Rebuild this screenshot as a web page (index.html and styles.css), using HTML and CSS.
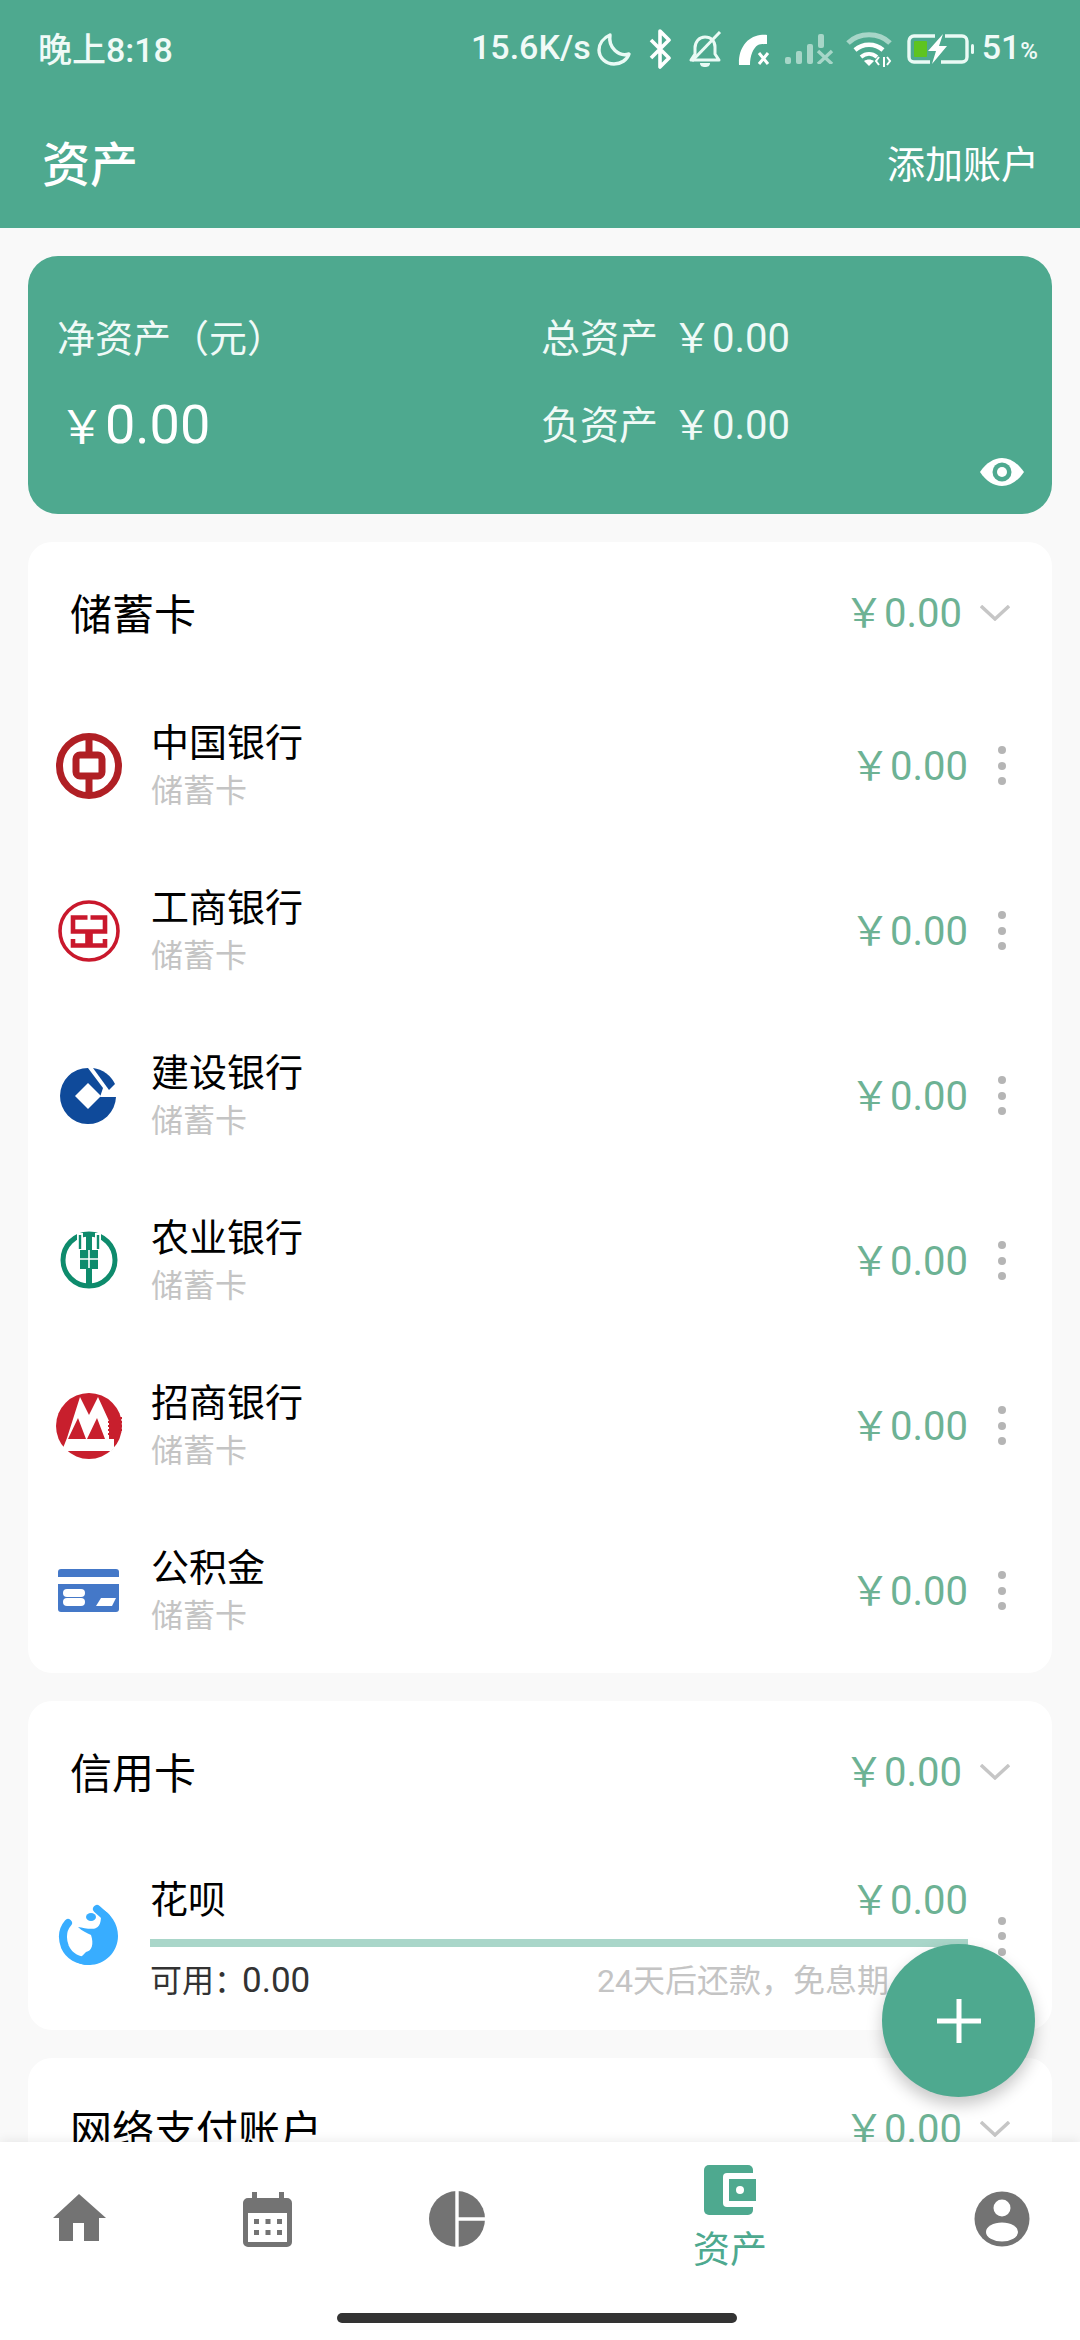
FILE: index.html
```html
<!DOCTYPE html>
<html lang="zh">
<head>
<meta charset="utf-8">
<title>资产</title>
<link rel="stylesheet" href="styles.css">
</head>
<body>
<div class="app">
  <header class="top">
    <div class="status">
      <span class="clock">晚上8:18</span>
      <div class="status-right">
        <span class="speed">15.6K/s</span>
        <svg class="st st-moon" viewBox="0 0 35 33"><path d="M13 2C6 5 2 11 2 17c0 8 7 14 15 14 7 0 13-4 15-10-10 3-21-6-19-19z" fill="none" stroke="#eafaf5" stroke-width="3.400" stroke-linejoin="round"/></svg>
        <svg class="st st-bt" viewBox="0 0 24 40"><path d="M3 11l18 18-9 9V2l9 9-18 18" fill="none" stroke="#fff" stroke-width="3.600" stroke-linejoin="round"/></svg>
        <svg class="st st-bell" viewBox="0 0 35 37"><path d="M17 6c-6 0-10 5-10 11v6l-4 6h28l-4-6v-7c0-6-4-10-10-10z" fill="none" stroke="#eafaf5" stroke-width="3" stroke-linejoin="round"/><path d="M32 1L4 30" stroke="#eafaf5" stroke-width="3"/><path d="M12 32h10c0 3-2 4-5 4s-5-1-5-4z" fill="#eafaf5"/></svg>
        <svg class="st st-phone" viewBox="0 0 33 31"><path d="M1 31C0 16 8 3 22 1c3-.5 6-.5 7 0v9c-3 0-7 0-9 1-5 3-8 11-8 20z" fill="#fff"/><path d="M21 19l9 11M30 19l-9 11" stroke="#fff" stroke-width="3"/></svg>
        <svg class="st st-signal" viewBox="0 0 49 30"><g fill="#a7d6c8"><rect x="0" y="23" width="6" height="7" rx="2"/><rect x="11" y="17" width="6" height="13" rx="2"/><rect x="22" y="10" width="6" height="20" rx="2"/><rect x="33" y="0" width="6" height="14" rx="2"/></g><path d="M33 17l14 13M47 17L33 30" stroke="#a7d6c8" stroke-width="3.400"/></svg>
        <svg class="st st-wifi" viewBox="0 0 46 35"><path d="M2 11C13 0 33 0 44 11" fill="none" stroke="#a7d6c8" stroke-width="5"/><path d="M9 18c8-7 20-7 28 0" fill="none" stroke="#fff" stroke-width="4.500"/><path d="M15 25c5-4 11-4 16 0" fill="none" stroke="#fff" stroke-width="4"/><path d="M18 29c3-2 7-2 10 0l-5 5z" fill="#fff"/><path d="M33 25l-3 4 3 4M38 25v10M41 25l3 4-3 4" fill="none" stroke="#fff" stroke-width="2"/></svg>
        <svg class="st st-bat" viewBox="0 0 68 30"><path d="M28 2H7a5 5 0 0 0-5 5v16a5 5 0 0 0 5 5h16M38 2h17a5 5 0 0 1 5 5v16a5 5 0 0 1-5 5H34" fill="none" stroke="#eafaf5" stroke-width="3.400"/><rect x="7" y="7" width="13" height="16" rx="1" fill="#5ec41f"/><path d="M36 0L21 17h8l-4 13 15-18h-8z" fill="#fff"/><rect x="64" y="10" width="3" height="10" rx="1.500" fill="#eafaf5"/></svg>
        <span class="pct">51<small>%</small></span>
      </div>
    </div>
    <div class="toolbar">
      <h1 class="title">资产</h1>
      <span class="add">添加账户</span>
    </div>
  </header>

  <main class="scroll">
    <section class="hero">
      <div class="hero-label">净资产（元）</div>
      <div class="hero-stat"><span>总资产</span><span class="hero-val">￥0.00</span></div>
      <div class="hero-big"><span class="yen">￥</span>0.00</div>
      <div class="hero-stat"><span>负资产</span><span class="hero-val">￥0.00</span></div>
      <svg class="eye" viewBox="0 0 44 28"><path d="M0 14C6 5 14 0 22 0s16 5 22 14c-6 9-14 14-22 14S6 23 0 14z" fill="#fff"/><circle cx="22" cy="14" r="9.500" fill="#4ea98f"/><circle cx="22" cy="14" r="5" fill="#fff"/></svg>
    </section>

    <section class="card">
      <div class="head"><span class="head-title">储蓄卡</span><span class="val">￥0.00</span><svg class="chev" viewBox="0 0 30 16"><path d="M1 1l14 13L29 1" fill="none" stroke="#c6c6c6" stroke-width="3.400"/></svg></div>

      <div class="row">
        <svg class="logo" viewBox="0 0 66 66"><circle cx="33" cy="33" r="29.500" fill="none" stroke="#b01f24" stroke-width="7"/><rect x="20" y="22" width="26" height="21" rx="4" fill="none" stroke="#b01f24" stroke-width="7"/><path d="M33 4v18M33 44v18" stroke="#b01f24" stroke-width="7"/></svg>
        <div class="info"><div class="name">中国银行</div><div class="sub">储蓄卡</div></div>
        <span class="val">￥0.00</span>
        <div class="dots"><i></i><i></i><i></i></div>
      </div>

      <div class="row">
        <svg class="logo" viewBox="0 0 66 66"><circle cx="33" cy="33" r="29" fill="none" stroke="#c9182c" stroke-width="3.600"/><path d="M31.500 19.500H17v14h14.500v14H17V41M34.500 19.500H49v14H34.500v14H49V41" fill="none" stroke="#c9182c" stroke-width="4.600"/></svg>
        <div class="info"><div class="name">工商银行</div><div class="sub">储蓄卡</div></div>
        <span class="val">￥0.00</span>
        <div class="dots"><i></i><i></i><i></i></div>
      </div>

      <div class="row">
        <svg class="logo" viewBox="0 0 66 66"><path d="M32 5A28 28 0 1 0 60 34H44L47 25z" fill="#0f4a9a"/><path d="M32 20l13 13-13 13-13-13z" fill="#fff"/><path d="M37 5A28 28 0 0 1 59 21L53 27z" fill="#0f4a9a"/></svg>
        <div class="info"><div class="name">建设银行</div><div class="sub">储蓄卡</div></div>
        <span class="val">￥0.00</span>
        <div class="dots"><i></i><i></i><i></i></div>
      </div>

      <div class="row">
        <svg class="logo" viewBox="0 0 66 66"><circle cx="33" cy="32" r="26" fill="none" stroke="#0e8b6c" stroke-width="5"/><path d="M24 5v14M42 5v14" stroke="#fff" stroke-width="6"/><path d="M24 7v14M42 7v14" stroke="#0e8b6c" stroke-width="2.400"/><rect x="24" y="22" width="18" height="19" fill="#0e8b6c"/><path d="M30 4h6v56h-6z" fill="#0e8b6c"/><path d="M24 31h18M33 22v18" stroke="#fff" stroke-width="1.600"/></svg>
        <div class="info"><div class="name">农业银行</div><div class="sub">储蓄卡</div></div>
        <span class="val">￥0.00</span>
        <div class="dots"><i></i><i></i><i></i></div>
      </div>

      <div class="row">
        <svg class="logo" viewBox="0 0 66 66"><circle cx="33" cy="33" r="33" fill="#c81f2d"/><path d="M24 4l9 18 9-18 11 24v18h5v9l-3 3H8l-1-3 4-10z" fill="#fff"/><path d="M22 25L12 46h18zM41 25l-10 21h18z" fill="#c81f2d"/><path d="M52 25h14M52 29h14M52 33h14M52 37h14M52 41h12" stroke="#c81f2d" stroke-width="2"/></svg>
        <div class="info"><div class="name">招商银行</div><div class="sub">储蓄卡</div></div>
        <span class="val">￥0.00</span>
        <div class="dots"><i></i><i></i><i></i></div>
      </div>

      <div class="row">
        <svg class="logo" viewBox="0 0 66 66"><path d="M2 19v-5a3 3 0 0 1 3-3h55a3 3 0 0 1 3 3v5z" fill="#4478c8"/><path d="M2 26h61v25a3 3 0 0 1-3 3H5a3 3 0 0 1-3-3z" fill="#4478c8"/><rect x="7" y="31" width="22" height="8" rx="4" fill="#fff"/><rect x="7" y="40" width="22" height="8" rx="4" fill="#fff"/><path d="M45 40h15l-4 8H40z" fill="#fff"/></svg>
        <div class="info"><div class="name">公积金</div><div class="sub">储蓄卡</div></div>
        <span class="val">￥0.00</span>
        <div class="dots"><i></i><i></i><i></i></div>
      </div>
    </section>

    <section class="card">
      <div class="head"><span class="head-title">信用卡</span><span class="val">￥0.00</span><svg class="chev" viewBox="0 0 30 16"><path d="M1 1l14 13L29 1" fill="none" stroke="#c6c6c6" stroke-width="3.400"/></svg></div>
      <div class="row row-credit">
        <svg class="logo" viewBox="0 0 66 66"><path d="M12 20C6 27 6 36 9 44c4 9 13 14 24 14" fill="none" stroke="#38adff" stroke-width="8" stroke-linecap="round"/><path d="M44 5c11 5 18 16 18 28 0 16-13 29-29 29-6 0-12-2-16-5 6 0 9-4 13-8 6-1 8-8 5-17-4-2-9-4-13-8 6 1 14 3 18 1 5-2 6-10 4-20z" fill="#38adff"/><path d="M41 6l9 8" stroke="#38adff" stroke-width="8" stroke-linecap="round"/><ellipse cx="35" cy="14" rx="5" ry="4" fill="#38adff"/></svg>
        <div class="credit">
          <div class="credit-top"><span class="name">花呗</span><span class="val">￥0.00</span></div>
          <div class="bar"></div>
          <div class="credit-bottom"><span class="avail">可用：<span class="num">0.00</span></span><span class="due">24天后还款，免息期</span></div>
        </div>
        <div class="dots"><i></i><i></i><i></i></div>
      </div>
    </section>

    <section class="card">
      <div class="head"><span class="head-title">网络支付账户</span><span class="val">￥0.00</span><svg class="chev" viewBox="0 0 30 16"><path d="M1 1l14 13L29 1" fill="none" stroke="#c6c6c6" stroke-width="3.400"/></svg></div>
    </section>
  </main>

  <nav class="nav">
    <div class="tabs">
      <div class="tab"><svg class="tab-icon" viewBox="0 0 56 56"><path d="M28 3l27 24h-7v23H33V32H22v18H8V27H2z" fill="#737373"/></svg></div>
      <div class="tab"><svg class="tab-icon" viewBox="0 0 56 56"><path d="M12 1h5v6h22V1h5v6h3a5 5 0 0 1 5 5v39a5 5 0 0 1-5 5H8a5 5 0 0 1-5-5V12a5 5 0 0 1 5-5h4z" fill="#737373"/><rect x="8" y="22" width="39" height="29" fill="#fff"/><g fill="#737373"><rect x="14" y="28" width="5" height="5"/><rect x="25.500" y="28" width="5" height="5"/><rect x="37" y="28" width="5" height="5"/><rect x="14" y="39" width="5" height="5"/><rect x="25.500" y="39" width="5" height="5"/><rect x="37" y="39" width="5" height="5"/></g></svg></div>
      <div class="tab"><svg class="tab-icon" viewBox="0 0 56 56"><circle cx="28" cy="28" r="28" fill="#737373"/><path d="M28 0v56M28 28h28" stroke="#fff" stroke-width="3.400"/></svg></div>
      <div class="tab tab-active"><svg class="wallet" viewBox="0 0 52 50"><rect x="0" y="0" width="49" height="50" rx="5" fill="#4ea98f"/><path d="M52 8H23a4 4 0 0 0-4 4v26a4 4 0 0 0 4 4h29z" fill="#fff"/><rect x="25" y="14" width="27" height="22" fill="#4ea98f"/><circle cx="36" cy="25" r="4" fill="#fff"/></svg><span class="tab-label">资产</span></div>
      <div class="tab"><svg class="tab-icon" viewBox="0 0 56 56"><circle cx="28" cy="28" r="27.500" fill="#737373"/><circle cx="28" cy="17" r="8.500" fill="#fff"/><ellipse cx="28" cy="41" rx="16" ry="9.500" fill="#fff"/></svg></div>
    </div>
    <div class="home-bar"></div>
  </nav>

  <button class="fab" type="button" aria-label="添加"><svg class="fab-plus" viewBox="0 0 44 44"><path d="M22 0v44M0 22h44" stroke="#fff" stroke-width="5"/></svg></button>
</div>
</body>
</html>
```
FILE: styles.css
```css
* { box-sizing: border-box; }
html, body { margin: 0; padding: 0; }
body { font-family: Roboto, "Noto Sans CJK SC", sans-serif; }
.app { position: relative; width: 1080px; height: 2340px; display: flex; flex-direction: column; background: #f9f9f9; overflow: hidden; }

.top { background: #4ea98f; color: #fff; flex: none; }
.status { height: 100px; display: flex; align-items: center; justify-content: space-between; padding: 0 42px 2px 38px; font-size: 34px; font-weight: 500; color: #f0faf7; }
.status-right { display: flex; align-items: center; }
.clock, .speed, .pct { padding-bottom: 4px; }
.st { display: block; flex: none; }
.st-moon { width: 35px; height: 33px; margin-left: 6px; }
.st-bt { width: 24px; height: 40px; margin-left: 16px; }
.st-bell { width: 35px; height: 37px; margin-left: 16px; }
.st-phone { width: 33px; height: 31px; margin-left: 15px; }
.st-signal { width: 49px; height: 30px; margin-left: 14px; }
.st-wifi { width: 46px; height: 35px; margin-left: 12px; }
.st-bat { width: 68px; height: 30px; margin-left: 15px; }
.pct { margin-left: 7px; }
.pct small { font-size: 24px; }
.toolbar { height: 128px; display: flex; align-items: center; justify-content: space-between; padding: 0 41px 6px 42px; }
.title { margin: 0; font-size: 48px; font-weight: 500; }
.add { font-size: 38px; }

.scroll { flex: 1; min-height: 0; overflow: hidden; display: flex; flex-direction: column; gap: 28px; padding: 28px 28px 0; }
.hero { position: relative; flex: none; height: 258px; border-radius: 30px; background: #4ea98f; color: #fff; display: grid; grid-template-columns: 484px 1fr; grid-template-rows: 46px 46px; row-gap: 41px; padding: 60px 0 0 29px; align-items: center; }
.hero-label { font-size: 38px; line-height: 46px; color: #f0faf7; }
.hero-stat { display: flex; gap: 14px; font-size: 39px; line-height: 46px; color: #f0faf7; }
.hero-val { font-size: 40px; }
.hero-big { font-size: 54px; line-height: 46px; margin-left: 2px; }
.yen { font-size: 46px; }
.eye { position: absolute; right: 28px; bottom: 28px; width: 44px; height: 28px; }

.card { flex: none; background: #fff; border-radius: 24px; }
.head { height: 141px; display: flex; align-items: center; padding: 0 42px 0 42px; }
.head-title { flex: 1; font-size: 42px; color: #000; padding-bottom: 3px; }
.chev { width: 30px; height: 16px; margin-left: 18px; }
.val { font-size: 40px; color: #6db294; white-space: nowrap; padding-bottom: 6px; }

.row { height: 165px; display: flex; align-items: center; padding: 0 46px 0 28px; }
.row-credit { height: 188px; }
.logo { width: 66px; height: 66px; flex: none; }
.info { flex: 1; margin-left: 29px; padding-top: 2px; }
.name { font-size: 38px; line-height: 46px; color: #000; }
.sub { font-size: 32px; line-height: 44px; margin-top: 3px; color: #c4c4c4; }
.dots { width: 8px; margin-left: 30px; display: flex; flex-direction: column; gap: 7.500px; flex: none; }
.dots i { display: block; width: 8px; height: 8px; border-radius: 50%; background: #b5b5b5; }

.credit { flex: 1; margin-left: 28px; padding-top: 6px; }
.credit-top { display: flex; justify-content: space-between; align-items: center; height: 50px; }
.bar { height: 8px; margin-top: 14px; background: #a9d6c9; }
.credit-bottom { display: flex; justify-content: space-between; align-items: center; height: 44px; margin-top: 12px; padding-bottom: 6px; font-size: 32px; }
.avail { color: #333; }
.num { font-size: 35px; margin-left: -4px; }
.due { color: #c4c4c4; margin-right: 79px; }

.nav { flex: none; position: relative; z-index: 1; height: 198px; background: #fff; box-shadow: 0 -2px 10px rgba(0, 0, 0, .07); }
.tabs { height: 154px; display: grid; grid-template-columns: 158px 220px 158px 388px 156px; }
.tab { display: flex; flex-direction: column; align-items: center; justify-content: center; }
.tab-icon { width: 56px; height: 56px; }
.wallet { width: 52px; height: 50px; }
.tab-label { font-size: 37px; line-height: 44px; margin-top: 14px; color: #4ea98f; }
.home-bar { width: 400px; height: 10px; margin: 17px 0 0 337px; border-radius: 5px; background: #333; }

.fab { position: absolute; z-index: 2; left: 882px; top: 1944px; width: 153px; height: 153px; border: 0; padding: 0; border-radius: 50%; background: #4ea98f; box-shadow: 0 8px 16px rgba(0, 0, 0, .22); display: flex; align-items: center; justify-content: center; }
.fab-plus { width: 44px; height: 44px; }
```
